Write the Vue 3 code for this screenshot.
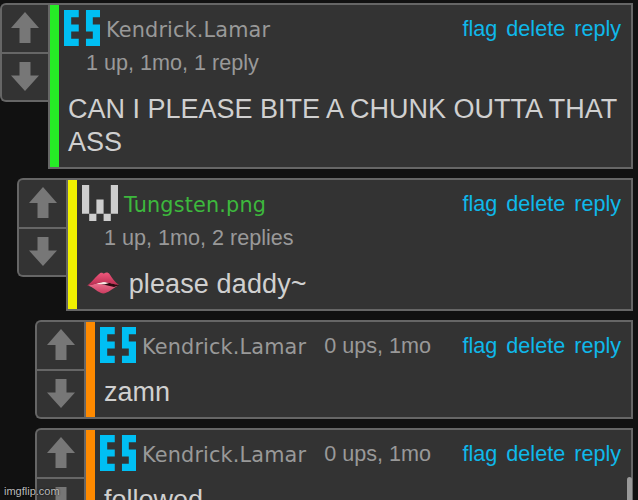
<template>
  <main class="page">
    <article
      v-for="comment in comments"
      :key="comment.id"
      class="comment"
      :class="'level-' + comment.level"
    >
      <div class="votes">
        <button type="button" class="vote-btn" aria-label="Upvote">
          <svg class="arrow" viewBox="0 0 28 31">
            <path d="M14 0L28 16H19.5V31H8.5V16H0Z" />
          </svg>
        </button>
        <button type="button" class="vote-btn" aria-label="Downvote">
          <svg class="arrow" viewBox="0 0 28 29">
            <path d="M14 29L28 13.500H19.500V0H8.500V13.500H0Z" />
          </svg>
        </button>
      </div>

      <div class="card">
        <div class="header">
          <div class="meta">
            <span class="user">
              <svg class="user-icon" viewBox="0 0 5 5">
                <path v-if="comment.icon === 'es'" fill="#00bff3" d="M0 0H2.050V1H1V2H2.050V3H1V4H2.050V5H0ZM3.050 0H5V1H4V2H5V5H3.050V4H4V3H3.050Z" />
                <path v-else fill="#cecece" d="M0 0H1V4H2V2H3V4H4V0H5V4H4V5H3V4H2V5H1V4H0Z" />
              </svg>
              <span class="username" :class="comment.icon">{{ comment.user }}</span>
            </span>
            <span class="stats">{{ comment.stats }}</span>
          </div>
          <nav class="links">
            <a v-for="link in links" :key="link">{{ link }}</a>
          </nav>
        </div>
        <p class="body" :class="{ spaced: comment.lips }">
          <svg v-if="comment.lips" class="lips" viewBox="0 0 32 22">
            <defs>
              <linearGradient id="upper" x1="0" y1="0" x2="0" y2="1">
                <stop offset="0" stop-color="#f0587c" />
                <stop offset="1" stop-color="#b92c50" />
              </linearGradient>
              <linearGradient id="lower" x1="0" y1="0" x2="0" y2="1">
                <stop offset="0" stop-color="#f27c98" />
                <stop offset="1" stop-color="#cc3c60" />
              </linearGradient>
            </defs>
            <path fill="url(#lower)" d="M1 13.500C6 15 9 19 14 21C19 23 25 17 31 13.500L19 9Z" />
            <path fill="#2c0a10" d="M12 11.500L17 9.500L32 13.200L27 15Z" />
            <path fill="#f7e9e4" d="M9 12L17 9.500L22 11L18 12.200Z" />
            <path fill="url(#upper)" d="M0 13.500C5 10.500 9 4 13 1.200C15 0 16 1.500 17 1.500C19 0 21 0 22.500 2C25 6 28 10.500 32 13C26 12.500 21 10 17 10C12 10 7 13 0 13.500Z" />
          </svg>
          {{ comment.text }}
        </p>
      </div>
    </article>

    <div class="scrollbar"></div>
    <div class="watermark">imgflip.com</div>
  </main>
</template>

<script setup>
const links = ['flag', 'delete', 'reply']

const comments = [
  { id: 1, level: 0, icon: 'es', user: 'Kendrick.Lamar', stats: '1 up, 1mo, 1 reply', text: 'CAN I PLEASE BITE A CHUNK OUTTA THAT ASS' },
  { id: 2, level: 1, icon: 'w', user: 'Tungsten.png', stats: '1 up, 1mo, 2 replies', text: 'please daddy~', lips: true },
  { id: 3, level: 2, icon: 'es', user: 'Kendrick.Lamar', stats: '0 ups, 1mo', text: 'zamn' },
  { id: 4, level: 2, icon: 'es', user: 'Kendrick.Lamar', stats: '0 ups, 1mo', text: 'followed' }
]
</script>

<style>
body {
  background: #111;
}
</style>

<style scoped>
.page {
  position: relative;
  display: flex;
  flex-direction: column;
  gap: 9px;
  width: 638px;
  height: 500px;
  padding: 3px 5px 0 0;
  box-sizing: border-box;
  overflow: hidden;
  background: #111;
  font-family: 'Liberation Sans', Arial, sans-serif;
}

.comment {
  display: flex;
  align-items: flex-start;
  flex-shrink: 0;
}

.level-1 {
  margin-left: 17px;
}

.level-2 {
  margin-left: 35px;
}

/* Vote buttons */
.votes {
  width: 49px;
  height: 99px;
  flex-shrink: 0;
  box-sizing: border-box;
  display: flex;
  flex-direction: column;
  border: 2px solid #666;
  border-right: 0;
  border-radius: 6px 0 0 6px;
  background: #333;
}

.level-0 .votes {
  width: 48px;
}

.vote-btn {
  display: flex;
  justify-content: center;
  align-items: flex-start;
  height: 47px;
  padding: 7px 0 0 0;
  border: 0;
  background: none;
}

.level-0 .vote-btn {
  padding-right: 1px;
}

.vote-btn + .vote-btn {
  height: 48px;
  padding-top: 8px;
  border-top: 2px solid #666;
}

.arrow {
  display: block;
  width: 28px;
  fill: #777;
}

/* Comment card */
.card {
  flex: 1;
  min-width: 0;
  height: 99px;
  box-sizing: border-box;
  border: 2px solid #666;
  background: linear-gradient(to right, var(--strip) 9px, #333 9px);
  padding: 5px 10px 0 14px;
}

.level-0 .card {
  --strip: #26ec26;
  height: 166px;
}

.level-1 .card {
  --strip: #f0f000;
  height: 133px;
}

.level-2 .card {
  --strip: #ff8a00;
}

.header {
  display: flex;
  align-items: flex-start;
  justify-content: space-between;
}

.meta {
  flex: 1;
  display: flex;
  flex-wrap: wrap;
  padding-bottom: 13px;
}

.user {
  display: flex;
  height: 36px;
}

.user-icon {
  width: 36px;
  height: 36px;
  margin-right: 6px;
}

.username {
  font-family: Verdana, 'DejaVu Sans', sans-serif;
  font-size: 20.8px;
  letter-spacing: 0.15px;
  line-height: 24px;
  padding-top: 8px;
  color: #999;
  white-space: nowrap;
}

.username.w {
  color: #3db83d;
}

/* Long stats wrap below the username */
.stats {
  font-size: 21.6px;
  line-height: 24px;
  margin: 0 0 5px 22px;
  padding-top: 5px;
  height: 29px;
  box-sizing: border-box;
  color: #999;
  white-space: nowrap;
}

.level-2 .stats {
  margin: 0 0 0 18px;
  padding-top: 7px;
  height: 31px;
}

.links {
  display: flex;
  gap: 9px;
  margin-left: 9px;
  padding-top: 7px;
  font-size: 21.6px;
  line-height: 24px;
  color: #0fb8ea;
}

.level-0 .meta {
  flex: none;
  width: 380px;
}

.body {
  margin: 0;
  padding-left: 4px;
  font-size: 27px;
  line-height: 33px;
  color: #d0d0d0;
}

.spaced {
  letter-spacing: 0.13px;
}

.lips {
  width: 32px;
  height: 22px;
  margin: 0 2px 0 1px;
  vertical-align: -1px;
}

/* Overlays */
.scrollbar {
  position: absolute;
  right: 6px;
  top: 477px;
  width: 5px;
  height: 40px;
  border-radius: 3px;
  background: #999;
}

.watermark {
  position: absolute;
  left: 4px;
  bottom: 2px;
  font-size: 11px;
  line-height: 13px;
  color: #bbb;
  text-shadow: 0 0 2px #000;
}
</style>
